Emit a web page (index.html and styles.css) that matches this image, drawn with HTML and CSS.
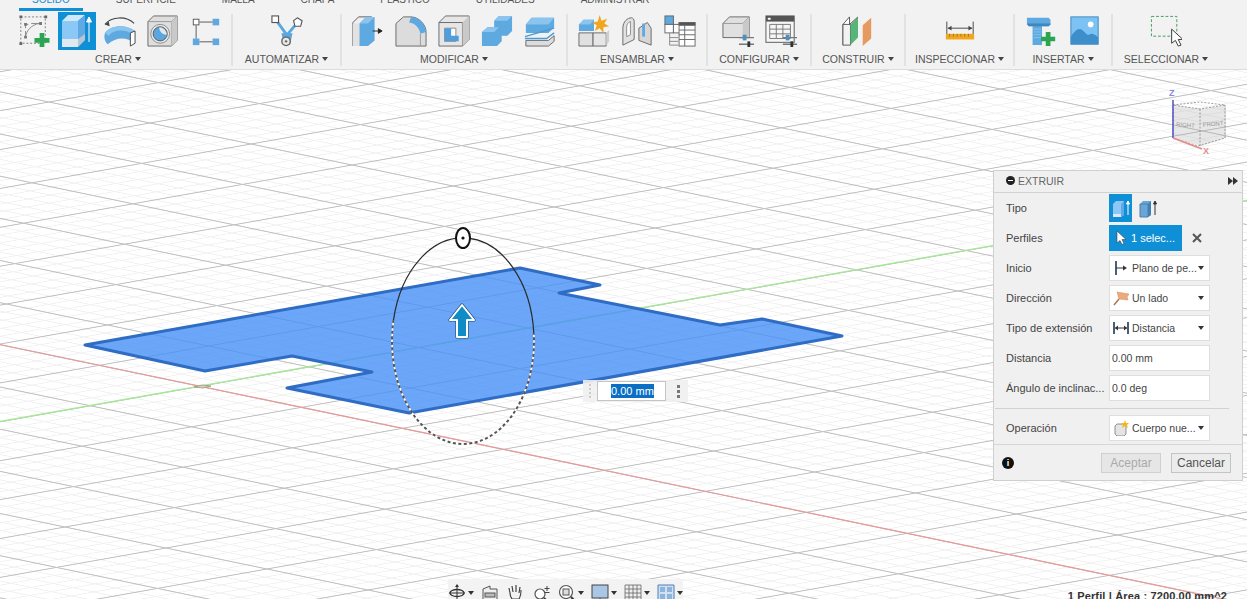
FILE: index.html
```html
<!DOCTYPE html>
<html lang="es">
<head>
<meta charset="utf-8">
<title>Extruir</title>
<link rel="stylesheet" href="styles.css">
</head>
<body>
<div class="app">
  <svg class="canvas" viewBox="0 0 1247 599" width="1247" height="599">
    <defs>
      <pattern id="grid" width="100" height="100" patternUnits="userSpaceOnUse" patternTransform="matrix(1.01 .21 1.095 -.194 150 123)">
        <path class="minor" d="M20 0V100M40 0V100M60 0V100M80 0V100M0 20H100M0 40H100M0 60H100M0 80H100"/>
        <path class="major" d="M0 0V100M100 0V100M0 0H100M0 100H100"/>
      </pattern>
    </defs>
    <rect class="grid-fill" width="1247" height="599"/>
    <line class="axis-red" x1="0" y1="344.500" x2="1247" y2="604"/>
    <line class="axis-green" x1="0" y1="421.500" x2="1247" y2="200.500"/>
    <path class="axis-origin" d="M194 387l8-2 9 1-8 2z"/>
    <polygon class="profile" points="85,345 520,268 600,285 559,293 720,325 762,319 842,336 409,413 287,388 372,372 292,356 205,371"/>
    <path class="ring-under" d="M393.500 320A71 103 0 1 0 533.800 333"/>
    <path class="ring-dash" d="M393.500 320A71 103 0 1 0 533.800 333"/>
    <path class="ring-solid" d="M393.500 320A71 103 0 0 1 533.800 333"/>
    <ellipse class="ring-handle" cx="463" cy="238" rx="7" ry="10"/>
    <circle class="ring-dot" cx="463" cy="238" r="1.600"/>
    <path class="arrow-edge" d="M462 305l12 15h-7v17h-10v-17h-7z"/>
    <path class="arrow" d="M462 305l12 15h-7v17h-10v-17h-7z"/>
  </svg>

  <header class="toolbar">
    <nav class="tabs">
      <span class="tab tab-active">SÓLIDO</span>
      <span class="tab">SUPERFICIE</span>
      <span class="tab">MALLA</span>
      <span class="tab">CHAPA</span>
      <span class="tab">PLÁSTICO</span>
      <span class="tab">UTILIDADES</span>
      <span class="tab">ADMINISTRAR</span>
    </nav>
    <div class="groups">
      <section class="group g-crear">
        <div class="icons">
          <svg class="ico" viewBox="0 0 34 34"><rect x="3" y="2" width="26" height="28" fill="none" stroke="#777" stroke-dasharray="2 2"/><path d="M1.500 .5h3v3h-3zM28 .5h3v3h-3zM1.500 29h3v3h-3z" fill="#666"/><path d="M8 10h3M24 9h-10M8 10v4M8 17v6M8 23c1-6 6-13 15-14" fill="none" stroke="#888"/><path d="M6.500 8.500h3v3h-3zM22.500 7.500h3v3h-3zM6.500 22h3v3h-3z" fill="#777"/><path d="M24 19h5v5.500h5.500v5h-5.500v4.500h-5v-4.500h-5.500v-5h5.500z" fill="#2ba552" transform="translate(-1 0)"/></svg>
          <span class="ico-active"><svg viewBox="0 0 38 38" width="38" height="38"><path d="M4 9l6-6h17l-7 6z" fill="#cfe9fb"/><path d="M4 9h16v26h-16z" fill="#8cc8f5"/><path d="M20 9l7-6v25l-7 7z" fill="#5fa9e4"/><path d="M4 27h16v8h-16z" fill="#dfe9ef"/><path d="M20 27l7-5v6l-7 7z" fill="#b7c6d1"/><path d="M31 30V7M28.500 10l2.500-5 2.500 5z" fill="#fff" stroke="#fff"/></svg></span>
          <svg class="ico" viewBox="0 0 34 34"><path d="M1 10C8 1 24 1 32 9" fill="none" stroke="#444" stroke-width="1.200"/><path d="M1 10l4-3 1 5z" fill="#444"/><path d="M1 19C8 10 24 10 33 17v13C24 23 13 23 4 31C0 27 0 23 1 19z" fill="#5da9e0"/><path d="M1 19C8 10 24 10 33 17l-5 2C20 15 10 16 5 22z" fill="#8ac4ef"/><path d="M28 19l5-2v13l-5 3z" fill="#fff" stroke="#444"/></svg>
          <svg class="ico" viewBox="0 0 34 34"><path d="M1 7l6-6h25v26l-6 6H1z" fill="#dedede" stroke="#666"/><path d="M1 7h25l6-6M26 7v26" fill="none" stroke="#999"/><path d="M26 7l6-6v26l-6 6z" fill="#c9c9c9"/><circle cx="14" cy="20" r="10" fill="#eaeaea" stroke="#888"/><circle cx="14" cy="20" r="7.500" fill="#5ba6de" stroke="#555"/><path d="M13 13a8 8 0 0 1 8 8c-4 0-8-3-8-8z" fill="#e6e6e6"/></svg>
          <svg class="ico" viewBox="0 0 34 34"><rect x="3.500" y="4.500" width="6" height="6" fill="#fff" stroke="#555"/><rect x="24" y="4" width="7" height="7" fill="#5da9e0"/><rect x="3" y="25" width="7" height="7" fill="#5da9e0"/><rect x="24" y="25" width="7" height="7" fill="#5da9e0"/><path d="M10 7.500h14M10 28.500h14M6.500 11v14" stroke="#555" fill="none"/></svg>
        </div>
        <div class="label">CREAR</div>
      </section>
      <section class="group g-auto">
        <div class="icons">
          <svg class="ico" viewBox="0 0 34 34"><path d="M5 5l11 15M28 8L18 20M13 21h8l-2 9h-4zM16 20v7M18 20v7" fill="none" stroke="#5aa6de" stroke-width="3"/><rect x="1" y="1" width="7" height="7" fill="#fff" stroke="#555" stroke-width="1.200"/><path d="M28 3l5 3-1.500 6h-6L24 6z" fill="#fff" stroke="#555" stroke-width="1.200"/><circle cx="16" cy="28" r="4.500" fill="#e8e8e8" stroke="#666" stroke-width="1.500"/><circle cx="16" cy="28" r="1.300" fill="#666"/></svg>
        </div>
        <div class="label">AUTOMATIZAR</div>
      </section>
      <section class="group g-modificar">
        <div class="icons">
          <svg class="ico" viewBox="0 0 34 34"><path d="M1 33V8l6-6h14" fill="#eee" stroke="#555"/><path d="M1 33h9V9H1z" fill="#e2e2e2"/><path d="M8 9l7-7h9v25l-7 6H8z" fill="#5da9e0"/><path d="M8 9l7-7h9l-7 7z" fill="#8ac4ef"/><path d="M22 17h9M28 14.500l4 2.500-4 2.500z" stroke="#222" fill="#222"/></svg>
          <svg class="ico" viewBox="0 0 34 34"><path d="M1 33V9L9 2h8c8 0 16 8 16 16v15z" fill="#dcdcdc" stroke="#666"/><path d="M17 2c8 0 16 8 16 16l-6 2C26 14 22 9 15 8z" fill="#5da9e0"/><path d="M27 20v13" stroke="#999"/></svg>
          <svg class="ico" viewBox="0 0 34 34"><path d="M1 8l7-7h25v25l-7 7H1z" fill="#e6e6e6" stroke="#666"/><path d="M1 8h25v25" fill="none" stroke="#666"/><path d="M26 8l7-7v25l-7 7z" fill="#c9c9c9"/><path d="M7 14h12v14H7z" fill="#fff" stroke="#888"/><path d="M7 14h7v8h8v6H7z" fill="#4f9ddb"/></svg>
          <svg class="ico" viewBox="0 0 34 34"><path d="M1 18l6-5h7V6l5-5h14v16l-5 5h-6v6l-5 5H1z" fill="#5da9e0"/><path d="M14 6l5-5h14l-5 5zM1 18l6-5h12l-5 5z" fill="#8ac4ef"/></svg>
          <svg class="ico" viewBox="0 0 34 34"><path d="M2 10l6-7h24v10l-6 6H2z" fill="#5da9e0"/><path d="M2 10l6-7h24l-6 7z" fill="#8ac4ef"/><path d="M1 23l31-9" stroke="#4b9bd6" stroke-width="1.500"/><path d="M1 25h23l8-6" stroke="#4b9bd6" fill="none" stroke-width="1.500"/><path d="M2 27h24l6-5v6l-6 5H2z" fill="#dcdcdc" stroke="#666"/></svg>
        </div>
        <div class="label">MODIFICAR</div>
      </section>
      <section class="group g-ensamblar">
        <div class="icons">
          <svg class="ico" viewBox="0 0 34 34"><path d="M1 10l5-5h11v12H1z" fill="#5da9e0"/><path d="M1 10l5-5h11l-4 5z" fill="#8ac4ef"/><path d="M1 19h15v14H1z" fill="#e0e0e0" stroke="#666"/><path d="M16 19h14v14H16z" fill="#e6e6e6" stroke="#666"/><path d="M30 19l3-3v12l-3 5z" fill="#cfcfcf"/><path d="M23 0l2 6 6-2-3 5 5 3-6 1 0 6-4-5-5 3 2-6-5-3 6-1z" fill="#f0a71f"/></svg>
          <svg class="ico" viewBox="0 0 34 34"><path d="M2 14c0-7 5-11 9-11c2 0 3 2 3 4v19l-12 6z" fill="#e2e2e2" stroke="#666"/><path d="M6 14c0-4 1-6 4-7v14l-4 2z" fill="#fff" stroke="#888"/><path d="M19 14l9-6 4 6v18l-13-5z" fill="#d6d6d6" stroke="#666"/><path d="M24 9v14" stroke="#5da9e0" stroke-width="3"/></svg>
          <svg class="ico" viewBox="0 0 34 34"><rect x="1" y="1" width="9" height="9" fill="#5da9e0" stroke="#666"/><rect x="1" y="10" width="9" height="9" fill="#fff" stroke="#666"/><rect x="10" y="10" width="9" height="9" fill="#fff" stroke="#666"/><path d="M6 19v13h9M6 24h9M6 28h9" fill="none" stroke="#888"/><rect x="16" y="8" width="17" height="25" fill="#fff" stroke="#666"/><path d="M16 8h17v3H16zM16 16h17M16 21h17M16 26h17M22 11v22" fill="#555" stroke="#666"/></svg>
        </div>
        <div class="label">ENSAMBLAR</div>
      </section>
      <section class="group g-configurar">
        <div class="icons">
          <svg class="ico" viewBox="0 0 34 34"><path d="M1 9l7-7h21v22H1z" fill="#e0e0e0" stroke="#666"/><path d="M1 9h21M22 9l7-7" stroke="#999"/><path d="M22 9l7-7v22h-7z" fill="#c9c9c9"/><path d="M18 24h16M18 31h16" stroke="#777" stroke-width="1.500"/><path d="M22 21h4v6h-4z" fill="#4f8fbd"/><path d="M27 28h3v6h-3z" fill="#333"/></svg>
          <svg class="ico" viewBox="0 0 34 34"><rect x="1" y="1" width="30" height="28" fill="#f6f6f6" stroke="#555"/><path d="M1 1h30v6H1z" fill="#555"/><rect x="3" y="3" width="3" height="2" fill="#fff"/><path d="M5 10h22v15H5zM5 15h22M5 20h22M12 10v15M19 10v15" fill="none" stroke="#777"/><path d="M19 24h15M19 31h15" stroke="#777" stroke-width="1.500"/><path d="M22 21h4v6h-4z" fill="#4f8fbd"/><path d="M27 28h3v6h-3z" fill="#333"/></svg>
        </div>
        <div class="label">CONFIGURAR</div>
      </section>
      <section class="group g-construir">
        <div class="icons">
          <svg class="ico" viewBox="0 0 34 34"><path d="M1 10l7-8v24l-7 6z" fill="#fff" stroke="#555"/><path d="M1 32h8V10H1z" fill="#f2f2f2" stroke="#555"/><path d="M9 10l8-8v22l-8 8z" fill="#58b57a"/><path d="M8 10l9-8" stroke="#555"/><path d="M22 11l9-8v22l-9 8z" fill="#e59a62"/></svg>
        </div>
        <div class="label">CONSTRUIR</div>
      </section>
      <section class="group g-inspeccionar">
        <div class="icons">
          <svg class="ico" viewBox="0 0 34 34"><path d="M3 7v14M31 7v14" stroke="#444"/><path d="M4 14h26" stroke="#444"/><path d="M4 14l4-2.500v5zM30 14l-4-2.500v5z" fill="#444"/><rect x="2" y="20" width="30" height="6" fill="#f0a71f"/><path d="M6 20v3M10 20v3M14 20v3M18 20v3M22 20v3M26 20v3" stroke="#a8741a"/></svg>
        </div>
        <div class="label">INSPECCIONAR</div>
      </section>
      <section class="group g-insertar">
        <div class="icons">
          <svg class="ico" viewBox="0 0 34 34"><path d="M1 3h23l2 2v5l-2 2H17v20H7V12H3l-2-2z" fill="#5da9e0"/><path d="M1 9h25v1l-2 2H3z" fill="#3f86bd"/><path d="M8 15h8M8 18h8M8 21h8M8 24h8" stroke="#8ac4ef"/><path d="M21 18h5v5h5v5h-5v5h-5v-5h-5v-5h5z" fill="#2ba552"/></svg>
          <svg class="ico" viewBox="0 0 34 34"><rect x="2" y="2" width="29" height="29" fill="#7cc3f4" stroke="#3f86bd"/><circle cx="23" cy="10" r="3" fill="#fff"/><path d="M2 31V23C6 17 10 13 14 16c3 2 5 6 7 5 3-2 6-1 10 3v7z" fill="#3d8fcb"/></svg>
        </div>
        <div class="label">INSERTAR</div>
      </section>
      <section class="group g-seleccionar">
        <div class="icons">
          <svg class="ico" viewBox="0 0 34 34"><rect x="1.500" y="1.500" width="27" height="21" fill="none" stroke="#3c9a5f" stroke-dasharray="3 2"/><path d="M23 15v15l4-3 3 6 3-1-3-6h5z" fill="#fff" stroke="#333"/></svg>
        </div>
        <div class="label">SELECCIONAR</div>
      </section>
    </div>
  </header>

  <svg class="viewcube" viewBox="0 0 70 70" width="70" height="70">
    <path class="cube-face" d="M8 17l28 4 25-4v33l-25 8-28-8z"/>
    <path class="cube-edge" d="M8 17l27-3 25 3-25 4zM8 17v33l25 8 27-8V17M35 21v37"/>
    <text class="cube-text" x="11" y="38" transform="rotate(6 11 38)">RIGHT</text>
    <text class="cube-text" x="38" y="39" transform="rotate(-6 38 39)">FRONT</text>
    <path class="cube-z" d="M8 12v38"/>
    <path class="cube-x" d="M8 50l29 11"/>
    <text class="cube-zl" x="4" y="8">Z</text>
    <text class="cube-xl" x="38" y="66">X</text>
  </svg>

  <div class="dim-tag">
    <span class="dim-grip"></span>
    <div class="dim-input"><span class="dim-sel">0.00 mm</span></div>
    <span class="dim-more"></span>
  </div>

  <aside class="panel">
    <div class="panel-head">
      <span class="minus"></span>
      <span class="panel-title">EXTRUIR</span>
      <svg class="ff" viewBox="0 0 10 8" width="10" height="8"><path d="M0 0l5 4-5 4zM5 0l5 4-5 4z" fill="#333"/></svg>
    </div>
    <div class="rows">
      <div class="row">
        <span class="row-label">Tipo</span>
        <div class="ctl-line">
          <span class="type-btn type-on"><svg viewBox="0 0 22 22" width="22" height="22"><path d="M3 7l3-3h8v14l-3 2H3z" fill="#8cc8f5"/><path d="M3 17h8v3H3z" fill="#dfe9ef"/><path d="M11 7l3-3v14l-3 2z" fill="#5fa9e4"/><path d="M18 18V5M16.500 7l1.500-3 1.500 3z" stroke="#fff" fill="#fff"/></svg></span>
          <span class="type-btn"><svg viewBox="0 0 22 22" width="22" height="22"><path d="M3 7l3-3h8v14l-3 2H3z" fill="#6aa5d8"/><path d="M3 7h8v13H3z" fill="none" stroke="#4a7fa8"/><path d="M11 7l3-3v14l-3 2z" fill="#3f80b8"/><path d="M18 18V5M16.500 7l1.500-3 1.500 3z" stroke="#333" fill="#333"/></svg></span>
        </div>
      </div>
      <div class="row">
        <span class="row-label">Perfiles</span>
        <div class="ctl-line">
          <span class="select-btn"><svg viewBox="0 0 12 16" width="12" height="16"><path d="M2 1v12l3-2.500 2 4 2-1-2-4h4z" fill="#fff" stroke="#444" stroke-width=".6"/></svg>1 selec...</span>
          <svg class="clear" viewBox="0 0 10 10" width="10" height="10"><path d="M1 1l8 8M9 1l-8 8" stroke="#555" stroke-width="2"/></svg>
        </div>
      </div>
      <div class="row">
        <span class="row-label">Inicio</span>
        <div class="ctl"><svg class="ctl-ico" viewBox="0 0 16 16"><path d="M3 1v14" stroke="#1d3557" stroke-width="1.600"/><path d="M3 8h9" stroke="#333"/><path d="M10 5.500l4 2.500-4 2.500z" fill="#333"/></svg><span class="ctl-text">Plano de pe...</span><i class="caret"></i></div>
      </div>
      <div class="row">
        <span class="row-label">Dirección</span>
        <div class="ctl"><svg class="ctl-ico" viewBox="0 0 16 16"><path d="M1 15L6 9" stroke="#a97b52" stroke-width="1.500"/><path d="M4 2l12 2-2 3 1 3-9-1z" fill="#eda97c" stroke="#c98a5f" stroke-width=".5"/></svg><span class="ctl-text">Un lado</span><i class="caret"></i></div>
      </div>
      <div class="row">
        <span class="row-label">Tipo de extensión</span>
        <div class="ctl"><svg class="ctl-ico" viewBox="0 0 16 16"><path d="M1 2v12M15 2v12" stroke="#1d3557" stroke-width="1.600"/><path d="M2 8h12" stroke="#333"/><path d="M2 8l3-2.500v5zM14 8l-3-2.500v5z" fill="#333"/></svg><span class="ctl-text">Distancia</span><i class="caret"></i></div>
      </div>
      <div class="row">
        <span class="row-label">Distancia</span>
        <div class="ctl ctl-input">0.00 mm</div>
      </div>
      <div class="row">
        <span class="row-label">Ángulo de inclinac...</span>
        <div class="ctl ctl-input">0.0 deg</div>
      </div>
      <hr class="rule">
      <div class="row">
        <span class="row-label">Operación</span>
        <div class="ctl"><svg class="ctl-ico" viewBox="0 0 16 16"><path d="M2 6l2-2h7l2 2v8l-2 2H4l-2-2z" fill="#e4e4e4" stroke="#777" stroke-width=".8"/><path d="M12 0l1 3 3 0-2 2 1 3-3-2-3 2 1-3-2-2 3 0z" fill="#f2b61e"/></svg><span class="ctl-text">Cuerpo nue...</span><i class="caret"></i></div>
      </div>
    </div>
    <div class="panel-foot">
      <span class="info">i</span>
      <span class="btn btn-off">Aceptar</span>
      <span class="btn">Cancelar</span>
    </div>
  </aside>

  <div class="navbar">
    <svg class="nav-ico nav-first" viewBox="0 0 18 18"><path d="M9 1v16M1 9h16" stroke="#333"/><ellipse cx="9" cy="9" rx="7" ry="3.500" fill="none" stroke="#333" stroke-width="1.300"/><path d="M9 0l-2 3h4z" fill="#333"/></svg><i class="caret"></i>
    <svg class="nav-ico" viewBox="0 0 18 18"><path d="M2 5l7-3v3h7v12H2z" fill="#eee" stroke="#555"/><rect x="4" y="9" width="10" height="4" fill="#bbb" stroke="#555"/></svg>
    <svg class="nav-ico" viewBox="0 0 18 18"><path d="M4 9L3 4M7 8L6 2M10 8V1M13 9l1-6M4 9c0 2 0 3 2 6h7c2-3 2-5 2-9" fill="none" stroke="#444" stroke-width="1.200"/></svg>
    <svg class="nav-ico nav-wide" viewBox="0 0 18 18"><circle cx="7" cy="10" r="5" fill="#fff" stroke="#555" stroke-width="1.200"/><path d="M11 14l4 4" stroke="#333" stroke-width="2"/><path d="M14 2v5M11.500 4.500h5M11.500 8.500h5" stroke="#444"/></svg>
    <svg class="nav-ico" viewBox="0 0 18 18"><circle cx="8" cy="8" r="6.500" fill="#fff" stroke="#555" stroke-width="1.200"/><rect x="5" y="5" width="6" height="6" fill="#ddd" stroke="#555"/><path d="M13 13l5 5" stroke="#333" stroke-width="2"/></svg><i class="caret"></i>
    <svg class="nav-ico" viewBox="0 0 18 18"><rect x="1" y="1" width="16" height="13" fill="#a9c6e4" stroke="#444"/><path d="M9 14v4M5 18h8" stroke="#444"/></svg><i class="caret"></i>
    <svg class="nav-ico" viewBox="0 0 18 18"><path d="M1 1h16v17H1zM1 5h16M1 9h16M1 13h16M5 1v17M9 1v17M13 1v17" fill="#eee" stroke="#666" stroke-width=".8"/></svg><i class="caret"></i>
    <svg class="nav-ico" viewBox="0 0 18 18"><path d="M1 1h16v17H1z" fill="#cfe0f2" stroke="#4d7fb5"/><path d="M3 3h5v5H3zM10 3h5v5h-5zM3 10h5v5H3zM10 10h5v5h-5z" fill="#8fb4db"/></svg><i class="caret"></i>
  </div>

  <div class="status">1 Perfil | Área : 7200.00 mm^2</div>
</div>
</body>
</html>
```
FILE: styles.css
```css
* { box-sizing: border-box; }
html, body { margin: 0; padding: 0; }
body { font-family: "Liberation Sans", Arial, sans-serif; color: #444; }
.app { position: relative; width: 1247px; height: 599px; overflow: hidden; background: #fff; }

/* 3D canvas */
.canvas { position: absolute; left: 0; top: 0; display: block; }
.grid-fill { fill: url(#grid); }
.minor { fill: none; stroke: #f1f1f1; stroke-width: 2.2; }
.major { fill: none; stroke: #c4c4c4; stroke-width: 2.8; }
.axis-red { stroke: #e79a9a; stroke-width: 1.200; }
.axis-green { stroke: #a6e897; stroke-width: 1.300; }
.axis-origin { fill: #d8d4c0; stroke: #9a9478; stroke-width: .8; }
.profile { fill: rgba(70, 144, 246, .8); stroke: #2f6cc4; stroke-width: 3; stroke-linejoin: round; }
.ring-under { fill: none; stroke: #fff; stroke-width: 1.600; }
.ring-dash { fill: none; stroke: #555; stroke-width: 2; stroke-dasharray: 3 2.500; }
.ring-solid { fill: none; stroke: #2a2a2a; stroke-width: 1.200; }
.ring-handle { fill: #fff; stroke: #111; stroke-width: 2; }
.ring-dot { fill: #111; }
.arrow-edge { fill: none; stroke: #1d4e7a; stroke-width: 3.200; stroke-linejoin: round; }
.arrow { fill: #0f8cc6; stroke: #fff; stroke-width: 2; stroke-linejoin: round; }

/* Toolbar */
.toolbar { position: relative; height: 70px; background: #f2f2f2; border-bottom: 1px solid #dcdcdc; overflow: hidden; }
.tabs { display: flex; gap: 20px; padding-left: 19px; height: 11px; font-size: 10px; color: #555; }
.tab { padding: 0 13px; height: 11px; line-height: 0; white-space: nowrap; }
.tab-active { color: #0f8fd6; border-bottom: 3px solid #0f8fd6; }
.groups { display: flex; margin-top: 3px; height: 52px; }
.group { display: flex; flex-direction: column; align-items: center; border-right: 2px solid #e2e2e2; flex: none; }
.g-crear { width: 233px; padding-left: 5px; }
.g-crear .icons { margin-left: 4px; }
.g-auto { width: 109px; }
.g-modificar { width: 226px; }
.g-ensamblar { width: 140px; }
.g-configurar { width: 104px; }
.g-construir { width: 94px; }
.g-inspeccionar { width: 109px; }
.g-insertar { width: 98px; }
.g-seleccionar { width: 106px; border-right: 0; }
.icons { display: flex; gap: 11px; height: 38px; padding-top: 1px; align-items: flex-start; }
.ico { width: 32px; height: 32px; display: block; flex: none; }
.ico-active { display: block; width: 38px; height: 38px; margin: -3px -3px 0; background: #0f8fd6; }
.label { font-size: 10.500px; line-height: 14px; color: #555; white-space: nowrap; display: flex; align-items: center; gap: 3px; }
.label::after { content: ""; border-left: 3px solid transparent; border-right: 3px solid transparent; border-top: 4px solid #444; }

/* View cube */
.viewcube { position: absolute; left: 1165px; top: 88px; }
.cube-face { fill: rgba(170, 170, 170, .28); }
.cube-edge { fill: none; stroke: #888; stroke-width: .8; stroke-dasharray: 2 1.500; }
.cube-text { font-size: 6px; fill: #999; font-family: "Liberation Sans", sans-serif; }
.cube-z { stroke: #5a5acb; stroke-width: 1.600; }
.cube-x { stroke: #e28b8b; stroke-width: 1.600; }
.cube-zl { font-size: 9px; font-weight: bold; fill: #8a8ad8; }
.cube-xl { font-size: 9px; font-weight: bold; fill: #e28b8b; }

/* Dimension tag */
.dim-tag { position: absolute; left: 583px; top: 380px; width: 105px; height: 22px; background: rgba(240, 240, 240, .9); display: flex; align-items: center; padding-left: 14px; }
.dim-grip { position: absolute; left: 6px; top: 4px; height: 14px; border-left: 2px dotted #ccc; }
.dim-input { width: 69px; height: 20px; background: #fff; border: 1px solid #c4c4c4; padding-left: 13px; font-size: 11px; line-height: 18px; }
.dim-sel { background: #0a6fc4; color: #fff; display: inline-block; line-height: 14px; }
.dim-more { position: absolute; left: 94px; top: 5px; height: 13px; border-left: 3px dotted #777; }

/* Panel */
.panel { position: absolute; left: 993px; top: 170px; width: 250px; height: 311px; background: #f0f0f0; border: 1px solid #cfcfcf; display: flex; flex-direction: column; font-size: 11px; }
.panel-head { height: 22px; border-bottom: 1px solid #d2d2d2; display: flex; align-items: center; padding: 0 4px 2px 12px; color: #666; font-size: 10.500px; }
.minus { width: 9px; height: 9px; border-radius: 50%; background: #222; position: relative; margin-right: 3px; }
.minus::after { content: ""; position: absolute; left: 2px; right: 2px; top: 4px; height: 1px; background: #fff; }
.panel-title { flex: 1; }
.ff { display: block; flex: none; }
.rows { flex: 1; }
.row { height: 30px; display: flex; align-items: center; padding-left: 12px; }
.row-label { width: 103px; flex: none; color: #444; white-space: nowrap; }
.ctl-line { display: flex; align-items: center; gap: 4px; }
.type-btn { width: 23px; height: 28px; display: flex; align-items: center; justify-content: center; }
.type-on { background: #0f8fd6; }
.select-btn { width: 73px; height: 26px; background: #0f8fd6; color: #fff; display: flex; align-items: center; gap: 4px; padding-left: 6px; }
.clear { margin-left: 6px; display: block; }
.ctl { width: 101px; height: 26px; background: #fff; border: 1px solid #dedede; display: flex; align-items: center; padding-left: 3px; padding-right: 5px; color: #444; }
.ctl-ico { width: 16px; height: 16px; flex: none; margin-right: 3px; }
.ctl-text { flex: 1; white-space: nowrap; font-size: 10.500px; }
.ctl-input { padding-left: 2px; font-size: 10.500px; }
.caret { width: 0; height: 0; border-left: 3px solid transparent; border-right: 3px solid transparent; border-top: 4px solid #333; flex: none; display: block; }
.rule { margin: 5px 13px 4px 1px; height: 0; border: 0; border-top: 1px solid #d2d2d2; }
.panel-foot { height: 36px; border-top: 1px solid #d6d6d6; display: flex; align-items: center; padding: 0 11px 0 8px; gap: 10px; }
.info { width: 12px; height: 12px; border-radius: 50%; background: #111; color: #fff; font-size: 9px; font-weight: bold; text-align: center; line-height: 12px; margin-right: auto; }
.btn { height: 20px; width: 60px; border: 1px solid #c4c4c4; background: #ececec; color: #555; font-size: 12px; text-align: center; line-height: 18px; }
.btn-off { color: #aaa; background: #e6e6e6; border-color: #d0d0d0; }

/* Navigation bar */
.navbar { position: absolute; left: 448px; top: 579px; width: 235px; height: 20px; background: #f3f3f3; display: flex; align-items: flex-start; padding: 5px 0 0; overflow: hidden; }
.nav-ico { width: 18px; height: 18px; flex: none; margin-left: 7px; }
.nav-first { margin-left: 0; }
.nav-wide { margin-left: 9px; }
.navbar .caret { margin-top: 7px; margin-left: 2px; }

/* Status */
.status { position: absolute; right: 20px; top: 590px; font-size: 11px; line-height: 13px; font-weight: bold; color: #333; white-space: nowrap; letter-spacing: .14px; }
```
